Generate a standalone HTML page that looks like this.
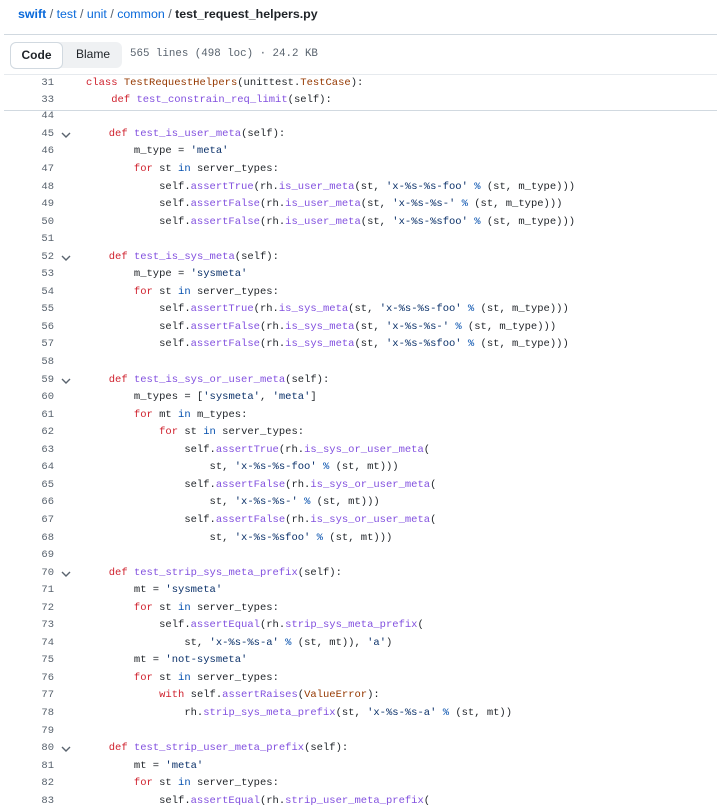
<!DOCTYPE html><html><head><meta charset="utf-8"><style>
body{margin:0;width:717px;height:811px;overflow:hidden;background:#fff;font-family:"Liberation Sans",sans-serif;position:relative}
.bc{position:absolute;left:18px;top:7px;font-size:12.4px;color:#0969da}
.bc b{font-weight:bold}.bc .s{color:#59636e}.bc .f{color:#1f2328;font-weight:bold}
.hr{position:absolute;left:4px;right:0;height:1px;background:#d1d9e0}
.tb{position:absolute;left:10px;top:42px;width:112px;height:26px;background:#eff1f3;border-radius:6px}
.code-b{position:absolute;left:10px;top:42px;width:51px;height:25px;border:1px solid #d1d9e0;border-radius:6px;background:#fff;font-size:12px;font-weight:bold;color:#1f2328;text-align:center;line-height:25px}
.bl{position:absolute;left:76px;top:47px;font-size:12px;color:#1f2328}
.meta{position:absolute;left:130px;top:48px;font-size:10.8px;color:#59636e;font-family:"Liberation Mono",monospace}
.ln{position:absolute;left:0;width:54px;text-align:right;font-family:"Liberation Mono",monospace;font-size:10.5px;color:#59636e;height:17.55px;line-height:17.55px}
.cd{position:absolute;left:83.5px;font-family:"Liberation Mono",monospace;font-size:10.5px;color:#1f2328;white-space:pre;height:17.55px;line-height:17.55px}
.cv{position:absolute;left:61px;width:10px;height:6px}
.k{color:#cf222e}.f{color:#8250df}.s{color:#0a3069}.o{color:#0550ae}.c{color:#953800}
</style></head><body>
<div class="bc"><b>swift</b> <span class="s">/</span> test <span class="s">/</span> unit <span class="s">/</span> common <span class="s">/</span> <span class="f">test_request_helpers.py</span></div>
<div class="hr" style="top:34px"></div>
<div class="tb"></div><div class="code-b">Code</div><div class="bl">Blame</div>
<div class="meta">565 lines (498 loc) · 24.2 KB</div>
<div class="hr" style="top:74px;background:#e6eaee"></div>
<div class="ln" style="top:74.5px">31</div><div class="cd" style="top:74.5px;left:86px"><span class="k">class</span> <span class="c">TestRequestHelpers</span>(unittest.<span class="c">TestCase</span>):</div>
<div class="ln" style="top:92px">33</div><div class="cd" style="top:92px;left:86px">    <span class="k">def</span> <span class="f">test_constrain_req_limit</span>(self):</div>
<div class="hr" style="top:110px"></div>
<div id="L"></div>
<script>
const lines=[
[44,""],[45,'    <span class="k">def</span> <span class="f">test_is_user_meta</span>(self):',1],
[46,"        m_type = <span class=s>'meta'</span>"],
[47,'        <span class="k">for</span> st <span class="o">in</span> server_types:'],
[48,"            self.<span class=f>assertTrue</span>(rh.<span class=f>is_user_meta</span>(st, <span class=s>'x-%s-%s-foo'</span> <span class=o>%</span> (st, m_type)))"],
[49,"            self.<span class=f>assertFalse</span>(rh.<span class=f>is_user_meta</span>(st, <span class=s>'x-%s-%s-'</span> <span class=o>%</span> (st, m_type)))"],
[50,"            self.<span class=f>assertFalse</span>(rh.<span class=f>is_user_meta</span>(st, <span class=s>'x-%s-%sfoo'</span> <span class=o>%</span> (st, m_type)))"],
[51,""],
[52,'    <span class="k">def</span> <span class="f">test_is_sys_meta</span>(self):',1],
[53,"        m_type = <span class=s>'sysmeta'</span>"],
[54,'        <span class="k">for</span> st <span class="o">in</span> server_types:'],
[55,"            self.<span class=f>assertTrue</span>(rh.<span class=f>is_sys_meta</span>(st, <span class=s>'x-%s-%s-foo'</span> <span class=o>%</span> (st, m_type)))"],
[56,"            self.<span class=f>assertFalse</span>(rh.<span class=f>is_sys_meta</span>(st, <span class=s>'x-%s-%s-'</span> <span class=o>%</span> (st, m_type)))"],
[57,"            self.<span class=f>assertFalse</span>(rh.<span class=f>is_sys_meta</span>(st, <span class=s>'x-%s-%sfoo'</span> <span class=o>%</span> (st, m_type)))"],
[58,""],
[59,'    <span class="k">def</span> <span class="f">test_is_sys_or_user_meta</span>(self):',1],
[60,"        m_types = [<span class=s>'sysmeta'</span>, <span class=s>'meta'</span>]"],
[61,'        <span class="k">for</span> mt <span class="o">in</span> m_types:'],
[62,'            <span class="k">for</span> st <span class="o">in</span> server_types:'],
[63,"                self.<span class=f>assertTrue</span>(rh.<span class=f>is_sys_or_user_meta</span>("],
[64,"                    st, <span class=s>'x-%s-%s-foo'</span> <span class=o>%</span> (st, mt)))"],
[65,"                self.<span class=f>assertFalse</span>(rh.<span class=f>is_sys_or_user_meta</span>("],
[66,"                    st, <span class=s>'x-%s-%s-'</span> <span class=o>%</span> (st, mt)))"],
[67,"                self.<span class=f>assertFalse</span>(rh.<span class=f>is_sys_or_user_meta</span>("],
[68,"                    st, <span class=s>'x-%s-%sfoo'</span> <span class=o>%</span> (st, mt)))"],
[69,""],
[70,'    <span class="k">def</span> <span class="f">test_strip_sys_meta_prefix</span>(self):',1],
[71,"        mt = <span class=s>'sysmeta'</span>"],
[72,'        <span class="k">for</span> st <span class="o">in</span> server_types:'],
[73,"            self.<span class=f>assertEqual</span>(rh.<span class=f>strip_sys_meta_prefix</span>("],
[74,"                st, <span class=s>'x-%s-%s-a'</span> <span class=o>%</span> (st, mt)), <span class=s>'a'</span>)"],
[75,"        mt = <span class=s>'not-sysmeta'</span>"],
[76,'        <span class="k">for</span> st <span class="o">in</span> server_types:'],
[77,'            <span class="k">with</span> self.<span class="f">assertRaises</span>(<span class="c">ValueError</span>):'],
[78,"                rh.<span class=f>strip_sys_meta_prefix</span>(st, <span class=s>'x-%s-%s-a'</span> <span class=o>%</span> (st, mt))"],
[79,""],
[80,'    <span class="k">def</span> <span class="f">test_strip_user_meta_prefix</span>(self):',1],
[81,"        mt = <span class=s>'meta'</span>"],
[82,'        <span class="k">for</span> st <span class="o">in</span> server_types:'],
[83,"            self.<span class=f>assertEqual</span>(rh.<span class=f>strip_user_meta_prefix</span>("]];
let h='';lines.forEach((l,i)=>{const t=108.3+i*17.55;
h+=`<div class="ln" style="top:${t}px">${l[0]}</div><div class="cd" style="top:${t}px">${l[1]}</div>`;
if(l[2])h+=`<svg class="cv" style="top:${t+6}px" viewBox="0 0 10 6"><path d="M1 1l4 4 4-4" fill="none" stroke="#59636e" stroke-width="1.4"/></svg>`;});
document.getElementById('L').innerHTML=h;
</script>
</body></html>
